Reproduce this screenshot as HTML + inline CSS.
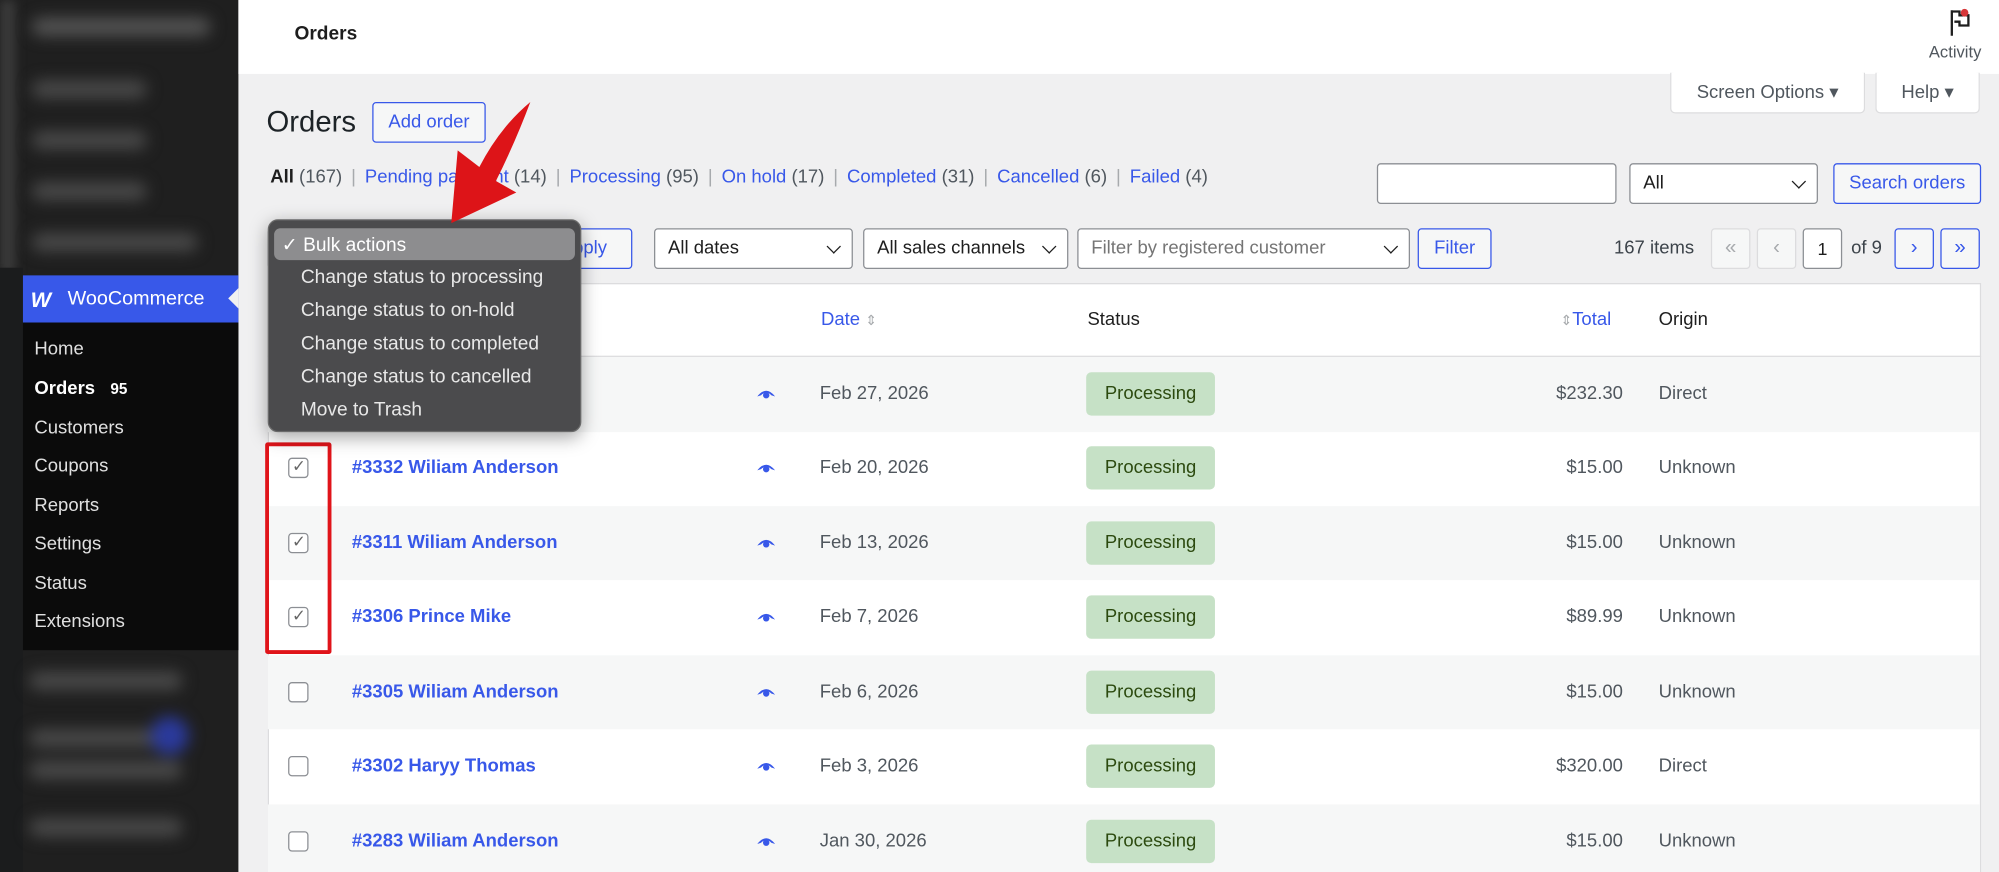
<!DOCTYPE html>
<html><head><meta charset="utf-8">
<style>
*{box-sizing:border-box;margin:0;padding:0}
html,body{width:1999px;height:872px;overflow:hidden;background:#f0f0f1}
#w{position:absolute;left:0;top:0;width:1568px;height:684px;transform:scale(1.27487);transform-origin:0 0;font-family:"Liberation Sans",sans-serif;color:#1e1e1e;background:#f0f0f1;overflow:hidden}
.a{position:absolute}
.blur{filter:blur(6px)}
.bi{position:absolute;height:14px;border-radius:7px;background:#4a4a4a}
.sm{position:absolute;left:27px;font-size:14.5px;color:#e0e0e0}
.btn{position:absolute;background:#fff;border:1px solid #8c8f94;border-radius:3px;font-size:14.5px;display:flex;align-items:center;padding-left:10px}
.bb{border-color:#3858e9;color:#3858e9;background:#f6f7f7;justify-content:center;padding:0}
.sel::after{content:"";position:absolute;right:10px;top:50%;width:7px;height:7px;border-right:1.5px solid #1e1e1e;border-bottom:1.5px solid #1e1e1e;transform:translateY(-70%) rotate(45deg)}
.row{position:absolute;left:210px;width:1343px;height:58.5px;font-size:14.5px}
.row>*{position:absolute;top:50%;transform:translateY(-50%)}
.cb{left:16px;width:16px;height:16px;border:1px solid #8c8f94;border-radius:3px;background:#fff}
.cb.c::after{content:"✓";position:absolute;left:2px;top:-2px;font-size:13px;color:#666}
.on{left:66px;color:#3858e9;font-weight:bold}
.eye{left:384px;width:14px;height:8px}
.dt{left:433px;color:#50575e}
.pill{left:642px;width:101px;height:34px;background:#c6e1c6;border-radius:4px;color:#2c4a0f;display:flex;align-items:center;justify-content:center}
.tot{right:280px;color:#50575e}
.org{left:1091px;color:#50575e}
.lk{color:#3858e9}
.ct{color:#50575e}
.sep{color:#a7aaad;margin:0 7px}
.pg{position:absolute;top:179px;width:31px;height:32px;border:1px solid #dcdcde;border-radius:3px;background:#f6f7f7;color:#a7aaad;display:flex;align-items:center;justify-content:center;font-size:16px}
.pg.b{border-color:#3858e9;color:#3858e9}
.mi{position:absolute;left:26px;font-size:15px;color:#e8e8e8}
</style></head><body><div id="w">
<div class="a" style="left:0;top:0;width:187px;height:684px;background:#1f1f1f"></div>
<div class="a" style="left:0;top:0;width:12px;height:215px;background:#3a3a3a;filter:blur(4px)"></div>
<div class="a blur" style="left:0;top:0;width:187px;height:210px">
<div class="bi" style="left:25px;top:14px;width:140px;background:#555"></div>
<div class="bi" style="left:25px;top:63px;width:90px"></div>
<div class="bi" style="left:25px;top:103px;width:90px"></div>
<div class="bi" style="left:25px;top:143px;width:90px"></div>
<div class="bi" style="left:25px;top:183px;width:130px"></div>
</div>
<div class="a" style="left:0;top:210px;width:18px;height:474px;background:#1b1c1d"></div>
<div class="a" style="left:18px;top:216px;width:169px;height:37px;background:#3858e9"></div>
<div class="a" style="left:24px;top:226px;color:#fff;font-weight:900;font-style:italic;font-size:17px;letter-spacing:-2px">W</div>
<div class="a" style="left:53px;top:226px;color:#fff;font-size:15.5px">WooCommerce</div>
<div class="a" style="left:179px;top:226px;width:0;height:0;border-top:8px solid transparent;border-bottom:8px solid transparent;border-right:8px solid #f0f0f1"></div>
<div class="a" style="left:18px;top:253px;width:169px;height:257px;background:#0b0b0b"></div>
<div class="sm" style="top:266px">Home</div>
<div class="sm" style="top:297px;color:#fff;font-weight:bold">Orders <span style="font-size:12px;margin-left:8px">95</span></div>
<div class="sm" style="top:328px">Customers</div>
<div class="sm" style="top:358px">Coupons</div>
<div class="sm" style="top:389px">Reports</div>
<div class="sm" style="top:419px">Settings</div>
<div class="sm" style="top:450px">Status</div>
<div class="sm" style="top:480px">Extensions</div>
<div class="a blur" style="left:18px;top:515px;width:169px;height:169px">
<div class="bi" style="left:5px;top:12px;width:120px"></div>
<div class="bi" style="left:5px;top:57px;width:120px"></div>
<div class="a" style="left:100px;top:47px;width:30px;height:30px;border-radius:50%;background:#2b3a9c"></div>
<div class="bi" style="left:5px;top:82px;width:120px"></div>
<div class="bi" style="left:5px;top:127px;width:120px"></div>
</div>
<div class="a" style="left:187px;top:0;width:1381px;height:58px;background:#fff"></div>
<div class="a" style="left:231px;top:18px;font-size:15px;font-weight:bold">Orders</div>
<svg class="a" style="left:1528px;top:6px" width="20" height="24" viewBox="0 0 20 24"><path d="M3 2v20M3 3h6v3h7v8H9v-3H5" fill="none" stroke="#1e1e1e" stroke-width="1.8"/><circle cx="13" cy="4" r="3" fill="#d63638"/></svg>
<div class="a" style="left:1513px;top:33px;font-size:13px;color:#50575e">Activity</div>
<div class="btn" style="left:1310px;top:57px;width:153px;height:32px;border-color:#dcdcde;border-top:none;border-radius:0 0 4px 4px;color:#50575e;justify-content:center;padding:0">Screen Options ▾</div>
<div class="btn" style="left:1471px;top:57px;width:82px;height:32px;border-color:#dcdcde;border-top:none;border-radius:0 0 4px 4px;color:#50575e;justify-content:center;padding:0">Help ▾</div>
<div class="a" style="left:209px;top:82px;font-size:23px;color:#1d2327">Orders</div>
<div class="btn bb" style="left:292px;top:80px;width:89px;height:32px">Add order</div>
<div class="a" style="left:212px;top:131px;font-size:14.5px;white-space:nowrap"><b>All</b> <span class="ct">(167)</span><span class="sep">|</span><span class="lk">Pending payment</span> <span class="ct">(14)</span><span class="sep">|</span><span class="lk">Processing</span> <span class="ct">(95)</span><span class="sep">|</span><span class="lk">On hold</span> <span class="ct">(17)</span><span class="sep">|</span><span class="lk">Completed</span> <span class="ct">(31)</span><span class="sep">|</span><span class="lk">Cancelled</span> <span class="ct">(6)</span><span class="sep">|</span><span class="lk">Failed</span> <span class="ct">(4)</span></div>
<div class="btn" style="left:1080px;top:128px;width:188px;height:32px"></div>
<div class="btn sel" style="left:1278px;top:128px;width:148px;height:32px">All</div>
<div class="btn bb" style="left:1438px;top:128px;width:116px;height:32px">Search orders</div>
<div class="btn sel" style="left:210px;top:179px;width:220px;height:32px"></div>
<div class="btn bb" style="left:420px;top:179px;width:76px;height:32px">Apply</div>
<div class="btn sel" style="left:513px;top:179px;width:156px;height:32px">All dates</div>
<div class="btn sel" style="left:677px;top:179px;width:161px;height:32px">All sales channels</div>
<div class="btn sel" style="left:845px;top:179px;width:261px;height:32px;color:#757575">Filter by registered customer</div>
<div class="btn bb" style="left:1112px;top:179px;width:58px;height:32px">Filter</div>
<div class="a" style="left:1266px;top:187px;font-size:14.5px;color:#3c434a">167 items</div>
<div class="pg" style="left:1342px">«</div>
<div class="pg" style="left:1378px">‹</div>
<div class="pg" style="left:1414px;background:#fff;border-color:#8c8f94;color:#1e1e1e;font-size:14px">1</div>
<div class="a" style="left:1452px;top:187px;font-size:14.5px;color:#3c434a">of 9</div>
<div class="pg b" style="left:1486px">›</div>
<div class="pg b" style="left:1522px">»</div>
<div class="a" style="left:210px;top:222px;width:1344px;height:470px;background:#fff;border:1px solid #dcdcde"></div>
<div class="a" style="left:210px;top:279px;width:1344px;height:1px;background:#dcdcde"></div>
<div class="a" style="left:644px;top:243px;font-size:14.5px;color:#3858e9">Date <span style="color:#a7aaad;font-size:11px">⇕</span></div>
<div class="a" style="left:853px;top:243px;font-size:14.5px">Status</div>
<div class="a" style="left:1224px;top:243px;font-size:14.5px;color:#3858e9"><span style="color:#a7aaad;font-size:11px">⇕</span>Total</div>
<div class="a" style="left:1301px;top:243px;font-size:14.5px">Origin</div>

<div class="row" style="top:280px;background:#f6f7f7"><div class="cb"></div><span class="on">#3336 John Doe</span><svg class="eye" viewBox="0 0 14 8"><path d="M0 6Q7-3 14 6L11 5Q7 1 3 5Z" fill="#3858e9"/><circle cx="7" cy="5" r="2.5" fill="#3858e9"/></svg><span class="dt">Feb 27, 2026</span><div class="pill">Processing</div><span class="tot">$232.30</span><span class="org">Direct</span></div>
<div class="row" style="top:338px"><div class="cb c"></div><span class="on">#3332 Wiliam Anderson</span><svg class="eye" viewBox="0 0 14 8"><path d="M0 6Q7-3 14 6L11 5Q7 1 3 5Z" fill="#3858e9"/><circle cx="7" cy="5" r="2.5" fill="#3858e9"/></svg><span class="dt">Feb 20, 2026</span><div class="pill">Processing</div><span class="tot">$15.00</span><span class="org">Unknown</span></div>
<div class="row" style="top:396.5px;background:#f6f7f7"><div class="cb c"></div><span class="on">#3311 Wiliam Anderson</span><svg class="eye" viewBox="0 0 14 8"><path d="M0 6Q7-3 14 6L11 5Q7 1 3 5Z" fill="#3858e9"/><circle cx="7" cy="5" r="2.5" fill="#3858e9"/></svg><span class="dt">Feb 13, 2026</span><div class="pill">Processing</div><span class="tot">$15.00</span><span class="org">Unknown</span></div>
<div class="row" style="top:455px"><div class="cb c"></div><span class="on">#3306 Prince Mike</span><svg class="eye" viewBox="0 0 14 8"><path d="M0 6Q7-3 14 6L11 5Q7 1 3 5Z" fill="#3858e9"/><circle cx="7" cy="5" r="2.5" fill="#3858e9"/></svg><span class="dt">Feb 7, 2026</span><div class="pill">Processing</div><span class="tot">$89.99</span><span class="org">Unknown</span></div>
<div class="row" style="top:513.5px;background:#f6f7f7"><div class="cb"></div><span class="on">#3305 Wiliam Anderson</span><svg class="eye" viewBox="0 0 14 8"><path d="M0 6Q7-3 14 6L11 5Q7 1 3 5Z" fill="#3858e9"/><circle cx="7" cy="5" r="2.5" fill="#3858e9"/></svg><span class="dt">Feb 6, 2026</span><div class="pill">Processing</div><span class="tot">$15.00</span><span class="org">Unknown</span></div>
<div class="row" style="top:572px"><div class="cb"></div><span class="on">#3302 Haryy Thomas</span><svg class="eye" viewBox="0 0 14 8"><path d="M0 6Q7-3 14 6L11 5Q7 1 3 5Z" fill="#3858e9"/><circle cx="7" cy="5" r="2.5" fill="#3858e9"/></svg><span class="dt">Feb 3, 2026</span><div class="pill">Processing</div><span class="tot">$320.00</span><span class="org">Direct</span></div>
<div class="row" style="top:630.5px;background:#f6f7f7"><div class="cb"></div><span class="on">#3283 Wiliam Anderson</span><svg class="eye" viewBox="0 0 14 8"><path d="M0 6Q7-3 14 6L11 5Q7 1 3 5Z" fill="#3858e9"/><circle cx="7" cy="5" r="2.5" fill="#3858e9"/></svg><span class="dt">Jan 30, 2026</span><div class="pill">Processing</div><span class="tot">$15.00</span><span class="org">Unknown</span></div>

<div class="a" style="left:208px;top:347px;width:52px;height:166px;border:3.5px solid #e0141a;border-radius:2px"></div>
<div class="a" style="left:210px;top:172px;width:246px;height:167px;background:#4b4b4d;border-radius:8px;border:1px solid #6a6a6a;box-shadow:0 4px 14px rgba(0,0,0,.35)"></div>
<div class="a" style="left:215px;top:179px;width:236px;height:25px;background:#8d8d8f;border-radius:5px"></div>
<div class="mi" style="left:221px;top:183px;color:#fff">✓ Bulk actions</div>
<div class="mi" style="top:209px;left:236px">Change status to processing</div>
<div class="mi" style="top:235px;left:236px">Change status to on-hold</div>
<div class="mi" style="top:261px;left:236px">Change status to completed</div>
<div class="mi" style="top:287px;left:236px">Change status to cancelled</div>
<div class="mi" style="top:313px;left:236px">Move to Trash</div>
<svg class="a" style="left:0;top:0" width="1568" height="684"><path d="M354 175 L359 118 L376 131 Q392 100 416 80 Q404 112 389 142 L405 151 Z" fill="#dd1418"/></svg>
</div></body></html>
